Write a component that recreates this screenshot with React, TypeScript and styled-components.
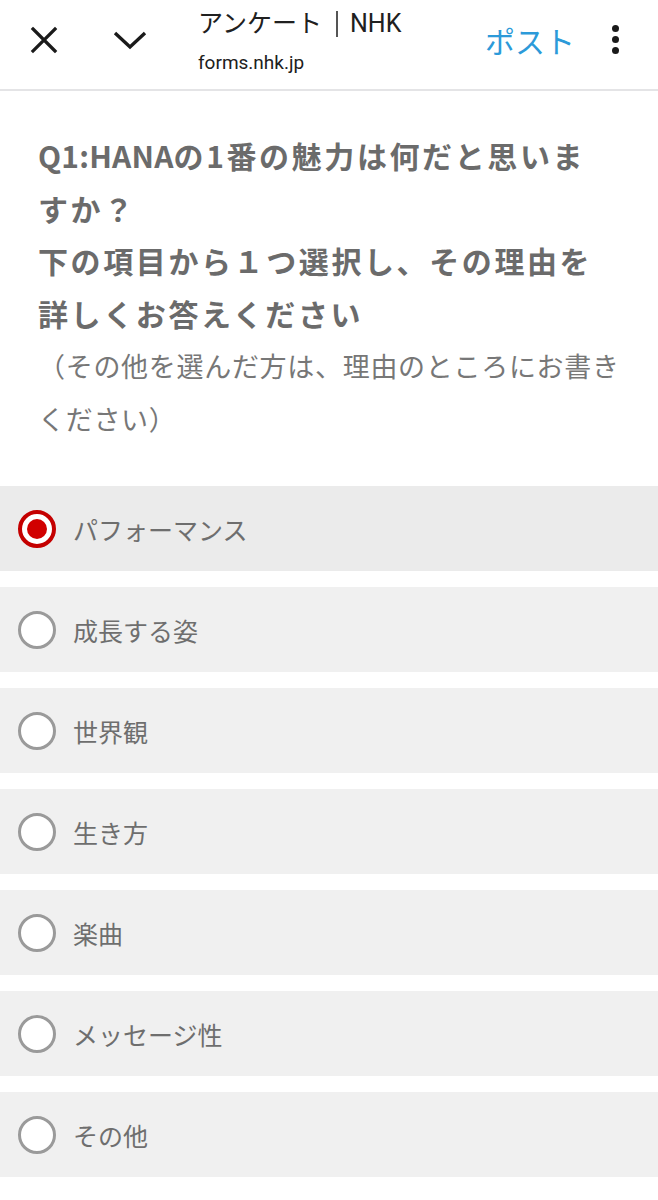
import { createGlobalStyle, styled } from "styled-components";

const GlobalStyle = createGlobalStyle`
  html, body {
    margin: 0;
    padding: 0;
    background: #ffffff;
  }
  body {
    font-family: Roboto, "Noto Sans CJK JP", sans-serif;
  }
`;

const options = [
  "パフォーマンス",
  "成長する姿",
  "世界観",
  "生き方",
  "楽曲",
  "メッセージ性",
  "その他",
];

export default function App() {
  const selected = 0;

  return (
    <>
      <GlobalStyle />
      <Header>
        <IconButton aria-label="close">
          <svg width="28" height="28" viewBox="0 0 28 28">
            <path
              d="M3 3 L25 25 M25 3 L3 25"
              stroke="#1a1a1a"
              strokeWidth="3.2"
              strokeLinecap="square"
              fill="none"
            />
          </svg>
        </IconButton>
        <IconButton aria-label="expand">
          <svg width="36" height="22" viewBox="0 0 36 22">
            <path
              d="M3 4 L18 18 L33 4"
              stroke="#1a1a1a"
              strokeWidth="3.4"
              fill="none"
            />
          </svg>
        </IconButton>
        <TitleBlock>
          <PageTitle>
            アンケート
            <Bar />
            NHK
          </PageTitle>
          <PageUrl>forms.nhk.jp</PageUrl>
        </TitleBlock>
        <PostLink>ポスト</PostLink>
        <Dots>
          <span />
          <span />
          <span />
        </Dots>
      </Header>

      <Main>
        <Question>
          <Latin>Q1:HANA</Latin>の1番の魅力は何だと思いますか？
          <br />
          下の項目から１つ選択し、その理由を詳しくお答えください
        </Question>
        <Note>（その他を選んだ方は、理由のところにお書きください）</Note>

        <OptionList>
          {options.map((label, i) => (
            <Option key={label} $selected={i === selected}>
              <Radio $checked={i === selected} />
              <OptionLabel>{label}</OptionLabel>
            </Option>
          ))}
        </OptionList>
      </Main>
    </>
  );
}

const Header = styled.header`
  height: 91px;
  border-bottom: 2px solid #e4e4e6;
  display: flex;
  align-items: center;
  padding: 0 0 10px 22px;
  box-sizing: border-box;
`;

const IconButton = styled.div`
  width: 44px;
  height: 44px;
  display: flex;
  align-items: center;
  justify-content: center;
  margin-right: 42px;

  &:nth-child(2) {
    margin-right: 46px;
  }
`;

const TitleBlock = styled.div`
  display: flex;
  flex-direction: column;
  flex: 1;
  margin-top: 4px;
`;

const PageTitle = styled.div`
  font-size: 25px;
  line-height: 30px;
  color: #202020;
  display: flex;
  align-items: center;
`;

const Bar = styled.span`
  display: inline-block;
  width: 2px;
  height: 26px;
  margin: 0 12px 0 14px;
  background: #555555;
`;

const PageUrl = styled.div`
  font-size: 19px;
  line-height: 24px;
  color: #202020;
  margin-top: 12px;
`;

const PostLink = styled.div`
  font-size: 30px;
  color: #2c9ad9;
  margin-right: 37px;
`;

const Dots = styled.div`
  width: 10px;
  display: flex;
  flex-direction: column;
  gap: 4px;
  margin-right: 36px;

  span {
    width: 7px;
    height: 7px;
    border-radius: 50%;
    background: #1a1a1a;
  }
`;

const Main = styled.main`
  padding: 38px 0 0;
`;

const Question = styled.h1`
  margin: 0;
  padding: 0 50px 0 38px;
  font-size: 30px;
  line-height: 52.5px;
  font-weight: 700;
  letter-spacing: 2.6px;
  color: #6b6b6b;
  font-family: "Noto Sans CJK JP", sans-serif;
`;

const Latin = styled.span`
  letter-spacing: 0.2px;
`;

const Note = styled.p`
  margin: 0;
  padding: 0 20px 0 38px;
  font-size: 27px;
  line-height: 53px;
  letter-spacing: 0.7px;
  color: #777777;
  font-family: "Noto Sans CJK JP", sans-serif;
`;

const OptionList = styled.div`
  margin-top: 41px;
  display: flex;
  flex-direction: column;
  gap: 16px;
`;

const Option = styled.label<{ $selected: boolean }>`
  height: 85px;
  display: flex;
  align-items: center;
  padding-left: 18px;
  background: ${(p) => (p.$selected ? "#ebebeb" : "#f0f0f0")};
`;

const Radio = styled.span<{ $checked: boolean }>`
  width: 38px;
  height: 38px;
  border-radius: 50%;
  box-sizing: border-box;
  background: #ffffff;
  border: ${(p) => (p.$checked ? "4px solid #c40000" : "3px solid #9a9a9a")};
  display: flex;
  align-items: center;
  justify-content: center;

  &::after {
    content: "";
    display: ${(p) => (p.$checked ? "block" : "none")};
    width: 20px;
    height: 20px;
    border-radius: 50%;
    background: #d10000;
  }
`;

const OptionLabel = styled.span`
  margin-left: 17px;
  font-size: 25px;
  color: #6e6e6e;
  font-family: "Noto Sans CJK JP", sans-serif;
`;
